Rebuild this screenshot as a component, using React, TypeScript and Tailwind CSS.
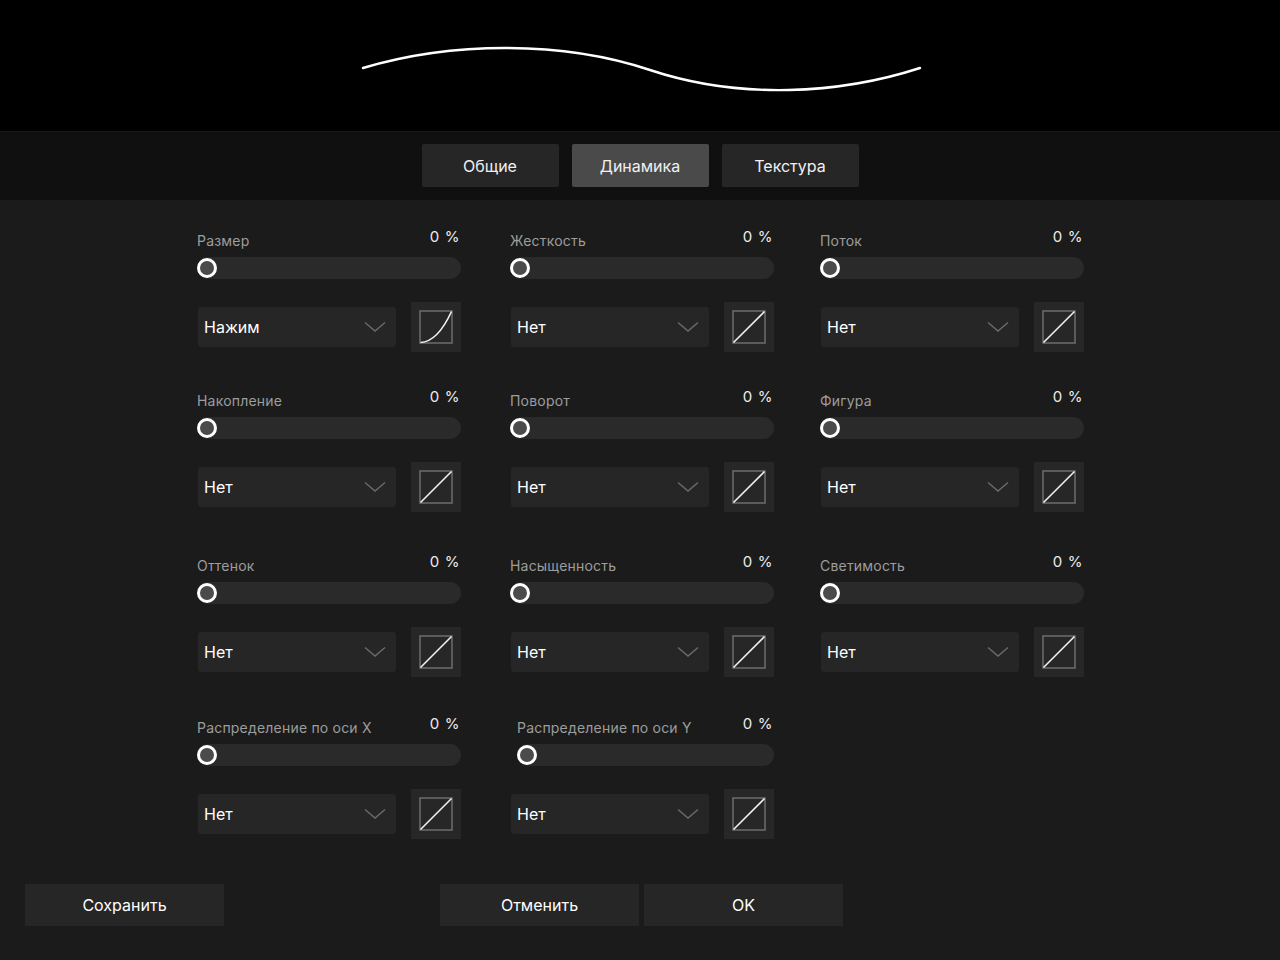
import React from 'react';

type Cell = {
    label: string;
    source: string;
    curve?: 'linear' | 'ease';
    shift?: boolean;
};

const rows: { top: string; cells: Cell[] }[] = [
    {
        top: 'mt-[31px]',
        cells: [
            { label: 'Размер', source: 'Нажим', curve: 'ease' },
            { label: 'Жесткость', source: 'Нет' },
            { label: 'Поток', source: 'Нет' },
        ],
    },
    {
        top: 'mt-[39px]',
        cells: [
            { label: 'Накопление', source: 'Нет' },
            { label: 'Поворот', source: 'Нет' },
            { label: 'Фигура', source: 'Нет' },
        ],
    },
    {
        top: 'mt-[44px]',
        cells: [
            { label: 'Оттенок', source: 'Нет' },
            { label: 'Насыщенность', source: 'Нет' },
            { label: 'Светимость', source: 'Нет' },
        ],
    },
    {
        top: 'mt-[41px]',
        cells: [
            { label: 'Распределение по оси X', source: 'Нет' },
            { label: 'Распределение по оси Y', source: 'Нет', shift: true },
        ],
    },
];

// column left margins (col2 sits 49px after col1, col3 46px after col2)
const colGap = ['', 'ml-[49px]', 'ml-[46px]'];

function CurveIcon({ kind }: { kind: 'linear' | 'ease' }) {
    return (
        <svg width="34" height="34" viewBox="0 0 34 34" fill="none">
            <rect x="1" y="1" width="32" height="32" stroke="#6e6e6e" strokeWidth="1.5" />
            {kind === 'ease' ? (
                <path d="M1.5 32.5 C 14 32, 24 20, 32.5 1.5" stroke="#f2f2f2" strokeWidth="1.6" />
            ) : (
                <path d="M1.5 32.5 L 32.5 1.5" stroke="#f2f2f2" strokeWidth="1.6" />
            )}
        </svg>
    );
}

function DynamicsCell({ cell, className }: { cell: Cell; className?: string }) {
    return (
        <div className={`w-[264px] ${className ?? ''}`}>
            {/* header */}
            <div className="flex items-center justify-between h-[18px]">
                <span className={`text-[14px] text-[#9d9d9d] tracking-[0.2px] ${cell.shift ? 'pl-[7px]' : ''}`}>
                    {cell.label}
                </span>
                <span className="text-[15px] text-[#ececec] -mt-[6px] tracking-[0.6px] pr-[1px]">0 %</span>
            </div>

            {/* slider */}
            <div className={`relative mt-[8px] h-[22px] rounded-full bg-[#2a2a2a] ${cell.shift ? 'ml-[7px]' : ''}`}>
                <div className="absolute left-0 top-[1px] w-[20px] h-[20px] rounded-full border-[3px] border-white bg-[#4b4b4b]" />
            </div>

            {/* controls */}
            <div className="mt-[23px] flex items-center justify-between">
                <div className="ml-[1px] w-[198px] h-[40px] rounded-[3px] bg-[#262626] flex items-center justify-between pl-[6px] pr-[10px]">
                    <span className="text-[16px] text-white">{cell.source}</span>
                    <svg width="22" height="12" viewBox="0 0 22 12" fill="none">
                        <path d="M1 1.5 L11 10 L21 1.5" stroke="#6b6b6b" strokeWidth="1.4" />
                    </svg>
                </div>
                <button className="w-[50px] h-[50px] bg-[#272727] flex items-center justify-center">
                    <CurveIcon kind={cell.curve ?? 'linear'} />
                </button>
            </div>
        </div>
    );
}

export default function App() {
    const tabs = ['Общие', 'Динамика', 'Текстура'];

    return (
        <div
            className="w-[1280px] h-[960px] flex flex-col bg-[#1b1b1b] overflow-hidden"
            style={{ fontFamily: 'Inter, "Noto Sans", sans-serif' }}
        >
            {/* Stroke preview */}
            <div className="h-[131px] bg-black shrink-0">
                <svg width="1280" height="131" viewBox="0 0 1280 131" fill="none">
                    <path
                        d="M363 68 C 450 42, 560 40, 650 70 S 840 94, 920 68"
                        stroke="#ffffff"
                        strokeWidth="2.4"
                        strokeLinecap="round"
                    />
                </svg>
            </div>

            {/* Tabs */}
            <div className="h-[69px] shrink-0 bg-[#101010] border-t border-[#181818] flex items-center justify-center gap-[13px]">
                {tabs.map((t) => (
                    <button
                        key={t}
                        className={`w-[137px] h-[43px] -mt-[1px] rounded-[2px] text-[16px] text-[#f0f0f0] ${
                            t === 'Динамика' ? 'bg-[#4a4a4a]' : 'bg-[#262626]'
                        }`}
                    >
                        {t}
                    </button>
                ))}
            </div>

            {/* Dynamics grid */}
            <div className="flex-1 flex flex-col">
                {rows.map((row, i) => (
                    <div key={i} className={`${row.top} flex pl-[197px]`}>
                        {row.cells.map((c, j) => (
                            <DynamicsCell key={c.label} cell={c} className={colGap[j]} />
                        ))}
                    </div>
                ))}

                {/* Footer */}
                <div className="mt-[45px] flex items-center pl-[25px]">
                    <button className="w-[199px] h-[42px] bg-[#262626] text-[16px] text-white">Сохранить</button>
                    <div className="ml-[216px] flex gap-[5px]">
                        <button className="w-[199px] h-[42px] bg-[#262626] text-[16px] text-white">Отменить</button>
                        <button className="w-[199px] h-[42px] bg-[#262626] text-[16px] text-white">OK</button>
                    </div>
                </div>
            </div>
        </div>
    );
}
